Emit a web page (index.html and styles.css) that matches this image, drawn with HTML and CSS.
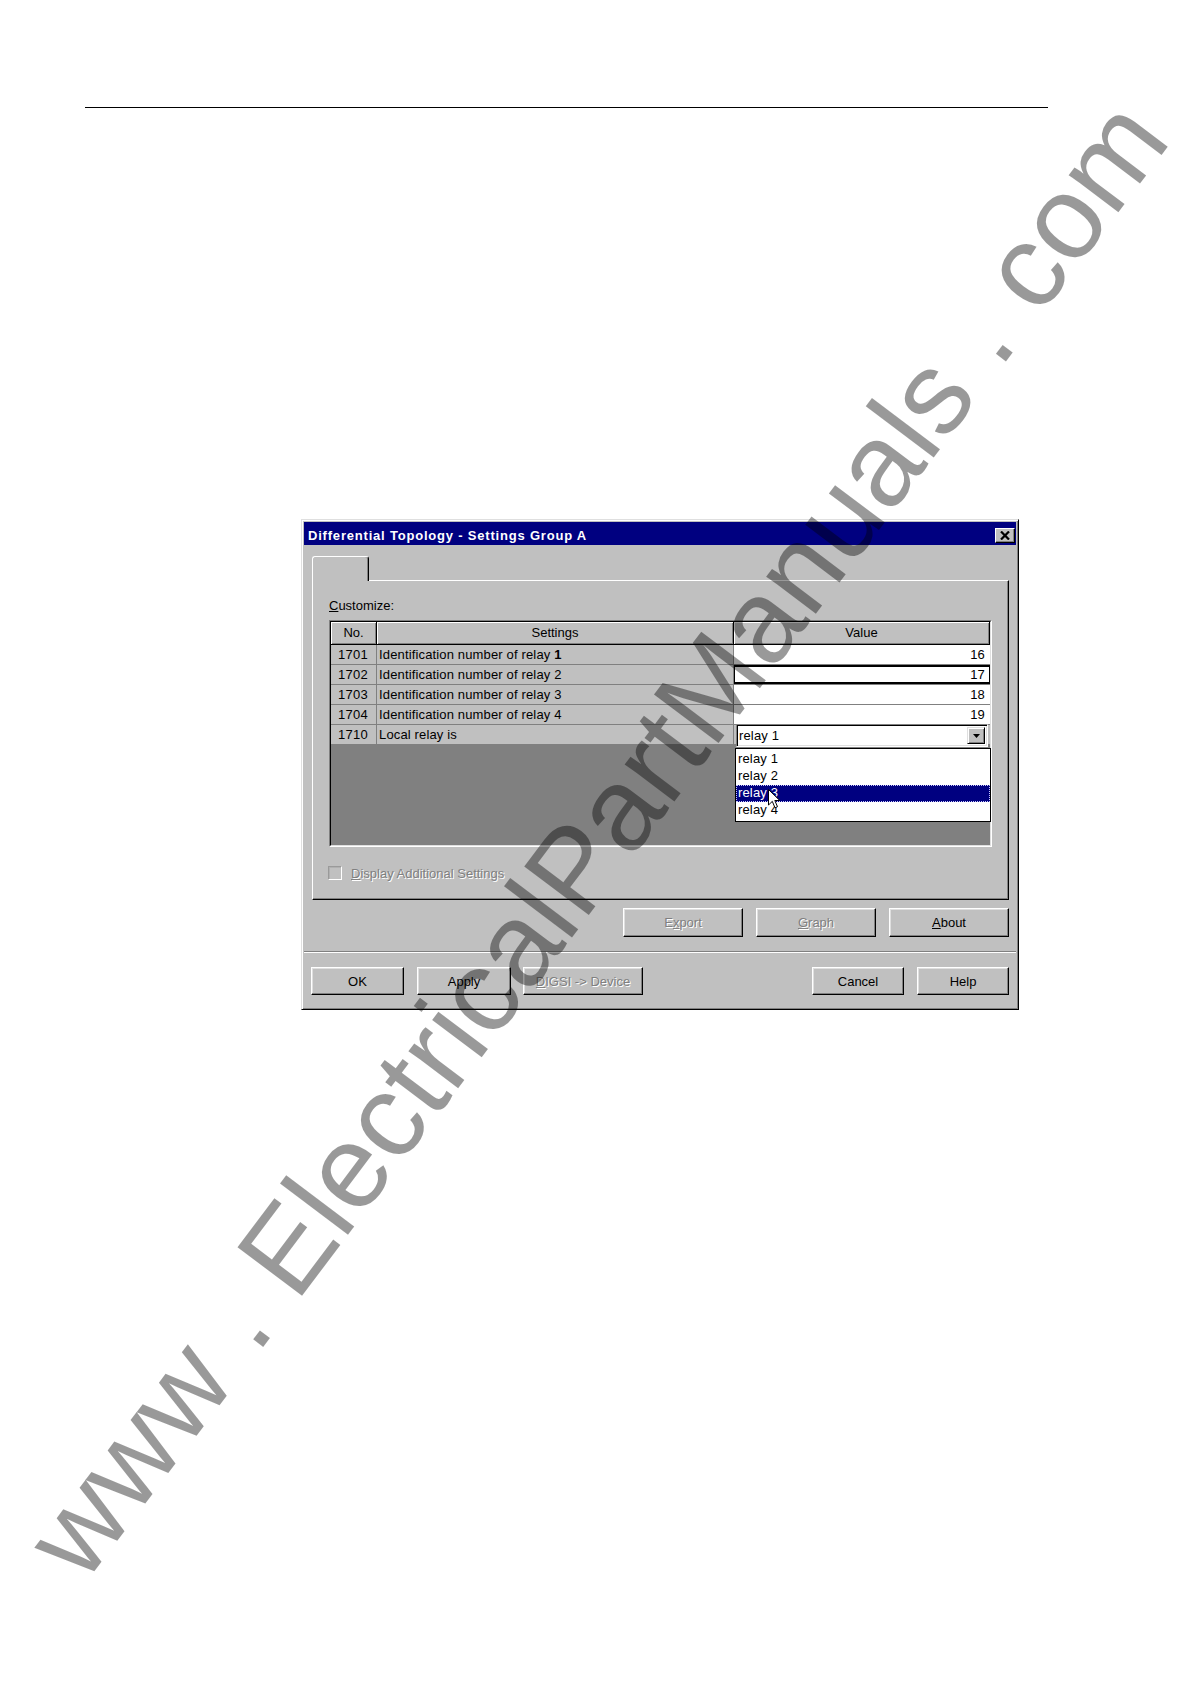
FILE: index.html
```html
<!DOCTYPE html>
<html>
<head>
<meta charset="utf-8">
<title>Differential Topology - Settings Group A</title>
<link rel="stylesheet" href="styles.css">
</head>
<body>
<div class="page">
  <div class="rule"></div>

  <div class="dialog">
    <div class="titlebar">
      <span class="title">Differential Topology - Settings Group A</span>
      <span class="close">
        <svg width="10" height="9" viewBox="0 0 10 9"><path d="M1 0.5 L9 8.5 M9 0.5 L1 8.5" stroke="#000" stroke-width="2.2" fill="none"/></svg>
      </span>
    </div>

    <div class="tabs"><div class="tab"></div></div>

    <div class="panel">
      <div class="label"><u>C</u>ustomize:</div>
      <div class="list">
        <div class="list-in">
          <div class="grid hdr">
            <div class="hc">No.</div>
            <div class="hc">Settings</div>
            <div class="hc">Value</div>
          </div>
          <div class="grid row">
            <div class="c-no">1701</div>
            <div class="c-set">Identification number of relay <b>1</b></div>
            <div class="c-val">16</div>
          </div>
          <div class="grid row">
            <div class="c-no">1702</div>
            <div class="c-set">Identification number of relay 2</div>
            <div class="c-val focus">17</div>
          </div>
          <div class="grid row">
            <div class="c-no">1703</div>
            <div class="c-set">Identification number of relay 3</div>
            <div class="c-val">18</div>
          </div>
          <div class="grid row">
            <div class="c-no">1704</div>
            <div class="c-set">Identification number of relay 4</div>
            <div class="c-val">19</div>
          </div>
          <div class="grid row">
            <div class="c-no">1710</div>
            <div class="c-set">Local relay is</div>
            <div class="c-val edit">
              <div class="combo">
                <span class="combo-text">relay 1</span>
                <span class="combo-btn">
                  <svg width="7" height="4" viewBox="0 0 7 4"><path d="M0 0 H7 L3.5 4 Z" fill="#000"/></svg>
                </span>
                <div class="dropdown">
                  <div class="opt">relay 1</div>
                  <div class="opt">relay 2</div>
                  <div class="opt sel">relay 3</div>
                  <div class="opt">relay 4</div>
                  <svg class="cursor" width="13" height="20" viewBox="0 0 13 20"><path d="M0.5 0.5 L0.5 16 L4.3 12.4 L7 18.8 L9.5 17.7 L6.8 11.5 L11.8 11.5 Z" fill="#fff" stroke="#000" stroke-width="1" stroke-linejoin="miter"/></svg>
                </div>
              </div>
            </div>
          </div>
          <div class="empty"></div>
        </div>
      </div>
      <div class="check">
        <span class="box"></span>
        <span class="dis"><u>D</u>isplay Additional Settings</span>
      </div>
    </div>

    <div class="actions">
      <div class="btn dis">E<u>x</u>port</div>
      <div class="btn dis"><u>G</u>raph</div>
      <div class="btn"><u>A</u>bout</div>
    </div>

    <div class="sep"></div>

    <div class="footer">
      <div class="btn fbtn b-ok">OK</div>
      <div class="btn fbtn b-apply">Apply</div>
      <div class="btn fbtn b-digsi dis"><u>D</u>IGSI -&gt; Device</div>
      <div class="btn fbtn b-cancel">Cancel</div>
      <div class="btn fbtn b-help">Help</div>
    </div>
  </div>

  <svg class="watermark" width="1190" height="1684" viewBox="0 0 1190 1684">
    <text x="84" y="1585" transform="rotate(-53 84 1585)">www . ElectricalPartManuals . com</text>
  </svg>
</div>
</body>
</html>
```

FILE: styles.css
```css
* {
  box-sizing: border-box;
}

body {
  margin: 0;
  background: #fff;
  font-family: "Liberation Sans", Arial, sans-serif;
  font-size: 13px;
  color: #000;
}

.page {
  position: relative;
  width: 1190px;
  height: 1684px;
  overflow: hidden;
  padding-top: 107px;
}

.rule {
  margin-left: 85px;
  width: 963px;
  border-top: 1px solid #000;
}

/* ---------- dialog window ---------- */
.dialog {
  margin: 411px 0 0 301px;
  width: 718px;
  height: 491px;
  background: #c0c0c0;
  border: 1px solid;
  border-color: #dfdfdf #000 #000 #dfdfdf;
  box-shadow: inset 1px 1px #fff, inset -1px -1px #808080;
  padding: 2px;
  display: flex;
  flex-direction: column;
}

.titlebar {
  height: 23px;
  flex: none;
  background: #000080;
  display: flex;
  align-items: center;
  justify-content: space-between;
  padding: 3px 1px 0 4px;
}

.title {
  color: #fff;
  font-weight: bold;
  font-size: 13px;
  letter-spacing: 0.8px;
  white-space: nowrap;
}

.close {
  width: 20px;
  height: 15px;
  background: #c0c0c0;
  border: 1px solid;
  border-color: #fff #000 #000 #fff;
  box-shadow: inset -1px -1px #808080;
  display: flex;
  align-items: center;
  justify-content: center;
}

/* ---------- tab ---------- */
.tabs {
  flex: none;
  margin-top: 11px;
  height: 24px;
  padding-left: 8px;
  display: flex;
}

.tab {
  position: relative;
  z-index: 1;
  width: 57px;
  height: 25px;
  background: #c0c0c0;
  border-top: 1px solid #fff;
  border-left: 1px solid #fff;
  border-right: 1px solid #000;
  border-radius: 3px 3px 0 0;
  box-shadow: inset -1px 0 #808080;
}

.panel {
  flex: none;
  margin-left: 8px;
  width: 697px;
  height: 320px;
  border: 1px solid;
  border-color: #fff #000 #000 #fff;
  box-shadow: inset -1px -1px #808080;
  padding: 17px 16px 0 16px;
}

.label {
  height: 15px;
  line-height: 15px;
}

/* ---------- list view ---------- */
.list {
  margin-top: 7px;
  height: 227px;
  border: 1px solid;
  border-color: #808080 #fff #fff #808080;
}

.list-in {
  height: 100%;
  border: 1px solid;
  border-color: #000 #dfdfdf #dfdfdf #000;
  background: #808080;
  display: flex;
  flex-direction: column;
}

.grid {
  display: grid;
  grid-template-columns: 46px 357px 1fr;
  flex: none;
}

.hdr {
  height: 23px;
}

.hc {
  background: #c0c0c0;
  box-shadow: inset 1px 1px #fff, inset -1px -1px #808080;
  border-right: 1px solid #000;
  border-bottom: 1px solid #000;
  text-align: center;
  line-height: 21px;
}

.row {
  height: 20px;
  line-height: 19px;
  letter-spacing: 0.15px;
}

.c-no {
  background: #c0c0c0;
  border-right: 1px solid #808080;
  border-bottom: 1px solid #808080;
  padding-left: 7px;
  letter-spacing: 0.3px;
}

.c-set {
  background: #c0c0c0;
  border-right: 1px solid #808080;
  border-bottom: 1px solid #808080;
  padding-left: 2px;
  white-space: nowrap;
}

.c-val {
  background: #fff;
  border-bottom: 1px solid #808080;
  text-align: right;
  padding-right: 5px;
}

.c-val.focus {
  box-shadow: inset 1px 2px 0 #000, inset -1px -2px 0 #000;
}

.c-val.edit {
  position: relative;
  background: #c0c0c0;
  padding: 0;
}

.combo {
  position: absolute;
  top: -1px;
  left: 2px;
  right: 2px;
  height: 23px;
  background: #fff;
  border: 1px solid;
  border-color: #808080 #fff #fff #808080;
  box-shadow: inset 1px 1px #000, inset -1px -1px #dfdfdf;
  display: flex;
  align-items: stretch;
  padding: 2px;
  text-align: left;
  z-index: 3;
}

.combo-text {
  flex: 1;
  line-height: 17px;
}

.combo-btn {
  width: 18px;
  background: #c0c0c0;
  border: 1px solid;
  border-color: #dfdfdf #000 #000 #dfdfdf;
  box-shadow: inset 1px 1px #fff, inset -1px -1px #808080;
  display: flex;
  align-items: center;
  justify-content: center;
}

.dropdown {
  position: absolute;
  top: 23px;
  left: -2px;
  right: -4px;
  height: 74px;
  background: #fff;
  border: 1px solid #000;
  padding: 2px 0;
  z-index: 4;
}

.opt {
  height: 17px;
  line-height: 16px;
  padding-left: 2px;
}

.opt.sel {
  background: #000080;
  color: #fff;
  outline: 1px dotted #c8c8ff;
  outline-offset: -1px;
}

.cursor {
  position: absolute;
  left: 32px;
  top: 40px;
}

.empty {
  flex: 1;
  background: #808080;
}

/* ---------- checkbox ---------- */
.check {
  margin-top: 19px;
  height: 14px;
  display: flex;
  align-items: center;
  margin-left: -1px;
}

.box {
  width: 14px;
  height: 14px;
  border: 1px solid;
  border-color: #9a9a9a #fff #fff #9a9a9a;
  box-shadow: inset 1px 1px #b0b0b0;
  background: #c0c0c0;
  margin-right: 9px;
}

.dis {
  color: #808080;
  text-shadow: 1px 1px 0 #fff;
}

/* ---------- buttons ---------- */
.actions {
  flex: none;
  margin-top: 8px;
  display: flex;
  justify-content: flex-end;
  gap: 13px;
  padding-right: 7px;
}

.btn {
  height: 29px;
  width: 120px;
  background: #c0c0c0;
  border: 1px solid;
  border-color: #fff #000 #000 #fff;
  box-shadow: inset -1px -1px #808080, inset 1px 1px #dfdfdf;
  display: flex;
  align-items: center;
  justify-content: center;
  white-space: nowrap;
}

.sep {
  flex: none;
  margin-top: 14px;
  height: 2px;
  border-top: 1px solid #808080;
  border-bottom: 1px solid #fff;
}

.footer {
  flex: none;
  margin-top: 14px;
  display: flex;
  padding: 0 7px;
}

.fbtn {
  height: 28px;
}

.b-ok { width: 93px; }
.b-apply { width: 94px; margin-left: 13px; }
.b-digsi { width: 120px; margin-left: 12px; }
.b-cancel { width: 92px; margin-left: auto; }
.b-help { width: 92px; margin-left: 13px; }

/* ---------- watermark ---------- */
.watermark {
  position: absolute;
  top: 0;
  left: 0;
  pointer-events: none;
  z-index: 10;
}

.watermark text {
  font-family: "Liberation Sans", Arial, sans-serif;
  font-size: 117.5px;
  fill: #000;
  fill-opacity: 0.4;
}
```
